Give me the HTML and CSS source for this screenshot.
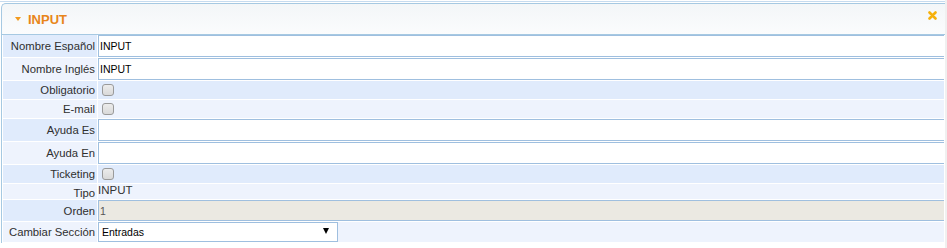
FILE: index.html
```html
<!DOCTYPE html>
<html>
<head>
<meta charset="utf-8">
<link rel="stylesheet" href="styles.css">
</head>
<body>
<div class="page">
  <div class="panel">
    <div class="head">
      <span class="tri"></span>
      <span class="title">INPUT</span>
      <svg class="close" width="9" height="9" viewBox="0 0 9 9"><path d="M1.5 1.5 L7.5 7.5 M7.5 1.5 L1.5 7.5" stroke="#f6b10c" stroke-width="2.6" stroke-linecap="round"/></svg>
    </div>
    <table class="form">
      <tr class="r-text odd"><th>Nombre Español</th><td><input class="txt" type="text" value="INPUT"></td></tr>
      <tr class="r-text even"><th>Nombre Inglés</th><td><input class="txt" type="text" value="INPUT"></td></tr>
      <tr class="r-chk odd"><th>Obligatorio</th><td><input class="chk" type="checkbox"></td></tr>
      <tr class="r-chk even"><th>E-mail</th><td><input class="chk" type="checkbox"></td></tr>
      <tr class="r-text odd"><th>Ayuda Es</th><td><input class="txt" type="text" value=""></td></tr>
      <tr class="r-text even"><th>Ayuda En</th><td><input class="txt" type="text" value=""></td></tr>
      <tr class="r-chk odd"><th>Ticketing</th><td><input class="chk" type="checkbox"></td></tr>
      <tr class="r-plain even"><th>Tipo</th><td class="plain">INPUT</td></tr>
      <tr class="r-ro odd"><th>Orden</th><td><input class="txt ro" type="text" value="1" readonly></td></tr>
      <tr class="r-sel even"><th>Cambiar Sección</th><td><span class="selwrap"><select class="sel"><option>Entradas</option></select><span class="arrow"></span></span></td></tr>
    </table>
  </div>
</div>
</body>
</html>
```

FILE: styles.css
```css
html, body {
  margin: 0;
  padding: 0;
  background: #f0f0f0;
}
body {
  font-family: "Liberation Sans", Arial, sans-serif;
  font-size: 11.3px;
  color: #2f2f2f;
}
.page {
  width: 945px;
  height: 248px;
  background: #fff;
  padding: 1px 0 0 1px;
  box-sizing: border-box;
}
.panel {
  border-top: 1px solid #c6dbef;
  margin-left: -1px;
  padding-left: 1px;
  padding-top: 1px;
}
.head {
  height: 30px;
  border: 1px solid #a6c9e2;
  border-right: none;
  border-top-left-radius: 5px;
  background: linear-gradient(#f3f6f8, #fbfcfd);
  display: flex;
  align-items: center;
  padding-left: 13px;
}
.tri {
  width: 0;
  height: 0;
  border-left: 3px solid transparent;
  border-right: 3px solid transparent;
  border-top: 4px solid #f29a1e;
  margin-right: 7px;
  margin-top: -1px;
}
.title {
  color: #e8861a;
  font-weight: bold;
  font-size: 13px;
  flex: 1;
}
.close {
  align-self: flex-start;
  margin-top: 7px;
  margin-right: 8px;
}
.form {
  border-collapse: separate;
  border-spacing: 1px 1px;
  width: 944px;
  margin-top: -1px;
  border-left: 1px solid #a6c9e2;
}
.form th {
  width: 92px;
  font-weight: normal;
  text-align: right;
  padding: 0 2px 0 0;
  white-space: nowrap;
  vertical-align: middle;
}
.form td {
  padding: 0;
  vertical-align: middle;
}
.odd th, .odd td { background: #e0ebfc; }
.even th, .even td { background: #eef3fd; }
.r-text th, .r-text td { height: 22px; }
.r-chk th, .r-chk td { height: 18px; }
.r-plain th, .r-plain td { height: 15px; }
.r-ro th, .r-ro td { height: 21px; }
.r-sel th, .r-sel td { height: 20px; }
.r-plain th { vertical-align: bottom; }
.txt {
  display: block;
  width: 100%;
  box-sizing: border-box;
  height: 22px;
  margin: 0;
  border: 1px solid #9fbfdf;
  border-width: 1px 0 1px 1px;
  background: #fff;
  font-family: "Liberation Sans", Arial, sans-serif;
  font-size: 10.5px;
  color: #000;
  padding: 0 0 0 1px;
  outline: none;
}
.ro {
  height: 21px;
  background: #ebe9e2;
  color: #555;
}
.chk {
  -webkit-appearance: none;
  appearance: none;
  display: block;
  margin: 0 0 0 4px;
  width: 12px;
  height: 12px;
  box-sizing: border-box;
  border: 1px solid #9a9a9a;
  border-radius: 3px;
  background: linear-gradient(#ececec, #d9d9d9);
}
.plain {
  vertical-align: top !important;
  font-size: 11.5px;
  color: #333;
}
.selwrap {
  position: relative;
  display: block;
  width: 240px;
}
.sel {
  -webkit-appearance: none;
  appearance: none;
  display: block;
  width: 240px;
  height: 20px;
  margin: 0;
  border: 1px solid #9fbfdf;
  border-radius: 0;
  background: #fff;
  font-family: "Liberation Sans", Arial, sans-serif;
  font-size: 10.5px;
  color: #000;
  padding: 0 0 0 3px;
  outline: none;
}
.arrow {
  position: absolute;
  right: 9px;
  top: 6px;
  width: 0;
  height: 0;
  border-left: 3.5px solid transparent;
  border-right: 3.5px solid transparent;
  border-top: 6px solid #000;
  pointer-events: none;
}
```
